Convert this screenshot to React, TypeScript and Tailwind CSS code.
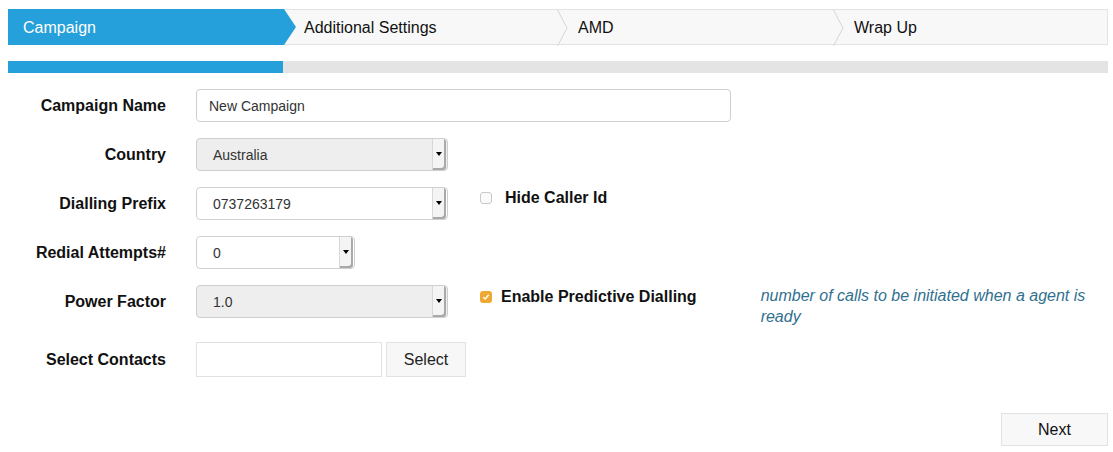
import type { ReactNode } from "react";

const BLUE = "#26a0da";

function Chevron() {
  return (
    <svg
      className="absolute right-[-10px] top-0 z-10"
      width="11"
      height="36"
      viewBox="0 0 11 36"
    >
      <polyline
        points="0.5,0 10,18 0.5,36"
        fill="none"
        stroke="#d6d6d6"
        strokeWidth="1"
      />
    </svg>
  );
}

function Tabs() {
  const steps = ["Campaign", "Additional Settings", "AMD", "Wrap Up"];
  const widths = ["w-[276px]", "w-[274px]", "w-[276px]", "flex-1"];
  return (
    <div className="flex h-[36px]">
      {steps.map((s, i) => {
        const active = i === 0;
        return (
          <div
            key={s}
            className={
              "relative flex shrink-0 items-center pt-[1px] text-[16px] " +
              widths[i] +
              (active
                ? " bg-[#26a0da] pl-[15px] text-white"
                : " border-y border-[#e3e3e3] bg-[#f8f8f8] pl-[20px] text-[#111]") +
              (i === steps.length - 1 ? " border-r" : "")
            }
          >
            {s}
            {active ? (
              <svg
                className="absolute right-[-12px] top-0 z-10"
                width="12"
                height="36"
                viewBox="0 0 12 36"
              >
                <polygon points="0,0 12,18 0,36" fill={BLUE} />
              </svg>
            ) : i < steps.length - 1 ? (
              <Chevron />
            ) : null}
          </div>
        );
      })}
    </div>
  );
}

function Label({ children }: { children: ReactNode }) {
  return (
    <div className="flex h-[33px] items-center justify-end pt-[1px] text-[16px] font-bold text-[#111]">
      {children}
    </div>
  );
}

function SelectBox({
  value,
  width,
  disabled,
}: {
  value: string;
  width: string;
  disabled?: boolean;
}) {
  return (
    <div
      className={
        "flex h-[33px] shrink-0 items-center justify-between rounded-[4px] border border-[#cfcfcf] " +
        width +
        (disabled ? " bg-[#eeeeee]" : " bg-white")
      }
    >
      <span className="pl-[16px] pt-[1px] text-[14px] text-[#333]">{value}</span>
      <span className="mr-[1px] flex h-[31px] w-[14px] items-center justify-center rounded-r-[3px] border-l border-[#d8d8d8] bg-[#f4f4f4] shadow-[inset_-2px_-2px_0_#a9a9a9]">
        <span className="mb-[1px] mr-[1px] h-0 w-0 border-x-[3px] border-t-[4px] border-x-transparent border-t-black" />
      </span>
    </div>
  );
}

function Check({ checked, label }: { checked?: boolean; label: string }) {
  return (
    <div className="flex shrink-0 items-center whitespace-nowrap">
      {checked ? (
        <span className="flex h-[12px] w-[12px] items-center justify-center rounded-[3px] bg-[#f0a930]">
          <svg width="8" height="8" viewBox="0 0 8 8">
            <polyline
              points="1.3,4.2 3.2,6 6.7,1.8"
              fill="none"
              stroke="white"
              strokeWidth="1.4"
            />
          </svg>
        </span>
      ) : (
        <span className="h-[12px] w-[12px] rounded-[3px] border border-[#c9c9c9] bg-[#fafafa]" />
      )}
      <span
        className={
          "text-[16px] font-bold text-[#111] " +
          (checked ? "ml-[9px]" : "ml-[13px]")
        }
      >
        {label}
      </span>
    </div>
  );
}

export default function App() {
  return (
    <div
      className="min-h-[452px] bg-white pl-[8px] pr-[5px] pt-[9px]"
      style={{ fontFamily: '"Liberation Sans", Arial, sans-serif' }}
    >
      <Tabs />

      <div className="mt-[16px] flex h-[12px] bg-[#e4e4e4]">
        <div className="w-[275px] bg-[#26a0da]" />
      </div>

      <div className="mt-[16px] grid grid-cols-[158px_1fr] gap-x-[30px] gap-y-[16px]">
        <Label>Campaign Name</Label>
        <div className="flex h-[33px] w-[535px] items-center rounded-[4px] border border-[#cfcfcf] bg-white pl-[12px] pt-[1px] text-[14px] text-[#333]">
          New Campaign
        </div>

        <Label>Country</Label>
        <SelectBox value="Australia" width="w-[252px]" disabled />

        <Label>Dialling Prefix</Label>
        <div className="flex items-start">
          <SelectBox value="0737263179" width="w-[252px]" />
          <div className="ml-[32px] mt-[-1px]">
            <Check label="Hide Caller Id" />
          </div>
        </div>

        <Label>Redial Attempts#</Label>
        <SelectBox value="0" width="w-[159px]" />

        <Label>Power Factor</Label>
        <div className="flex items-start">
          <SelectBox value="1.0" width="w-[252px]" disabled />
          <div className="ml-[32px] mt-[0px]">
            <Check checked label="Enable Predictive Dialling" />
          </div>
          <p className="ml-[64px] w-[350px] shrink-0 text-[16px] italic leading-[21px] text-[#31708f]">
            number of calls to be initiated when a agent is ready
          </p>
        </div>

        <div className="mt-[-1px] flex h-[35px] items-center justify-end pt-[1px] text-[16px] font-bold text-[#111]">
          Select Contacts
        </div>
        <div className="mt-[-1px] flex">
          <div className="h-[35px] w-[186px] border border-[#e2e2e2] bg-white" />
          <button className="ml-[4px] h-[35px] w-[80px] border border-[#e2e2e2] bg-[#f7f7f7] text-[16px] text-[#222]">
            Select
          </button>
        </div>
      </div>

      <div className="mt-[36px] flex justify-end">
        <button className="h-[33px] w-[107px] border border-[#e2e2e2] bg-[#f8f8f8] text-[16px] text-[#111]">
          Next
        </button>
      </div>
    </div>
  );
}
